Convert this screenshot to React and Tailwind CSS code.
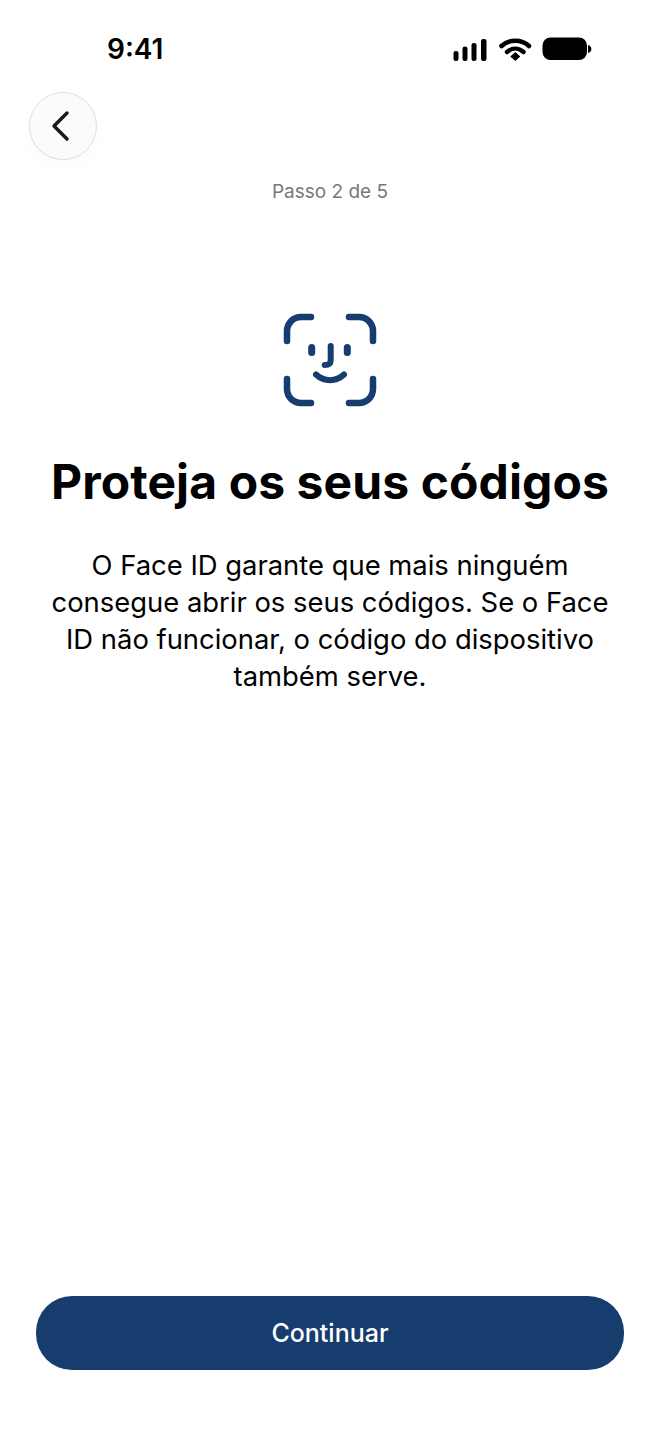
import React from "react";

const FONT = { fontFamily: "Inter, sans-serif" };

const StatusIcons = () => (
  <svg width="140" height="24" viewBox="0 0 140 24" fill="none">
    {/* signal */}
    <rect x="1.5" y="14" width="5" height="10" rx="2.200" fill="#000" />
    <rect x="10.5" y="9.5" width="5" height="14.5" rx="2.200" fill="#000" />
    <rect x="19.5" y="6" width="5" height="18" rx="2.200" fill="#000" />
    <rect x="29" y="2" width="5.500" height="22" rx="2.200" fill="#000" />
    {/* wifi */}
    <path d="M49.500 9C57 2 69.500 2 77 9" stroke="#000" strokeWidth="4.600" strokeLinecap="round" />
    <path d="M55 15C60 10.500 66.500 10.500 71.500 15" stroke="#000" strokeWidth="4.400" strokeLinecap="round" />
    <path d="M58.300 19.400L63.300 15L68.300 19.400L63.300 24Z" fill="#000" />
    {/* battery */}
    <rect x="90.5" y="0.5" width="44.5" height="22.5" rx="8" fill="#000" />
    <path d="M136 8c2 .4 3.4 2 3.4 4s-1.4 3.600-3.400 4z" fill="#000" />
  </svg>
);

const FaceId = () => (
  <svg width="120" height="120" viewBox="0 0 120 120" fill="none" stroke="#163d6e" strokeWidth="6.500" strokeLinecap="round">
    <path d="M17 41V31a14 14 0 0 1 14-14H41" />
    <path d="M79 17H89a14 14 0 0 1 14 14V41" />
    <path d="M17 79V89a14 14 0 0 0 14 14H41" />
    <path d="M79 103H89a14 14 0 0 0 14-14V79" />
    <path d="M41.700 47.500V52.500" strokeWidth="7" />
    <path d="M77.300 47.500V52.500" strokeWidth="7" />
    <path d="M60.700 46V60c0 3.500-2 5-6 5" strokeWidth="6" />
    <path d="M46 74.500c8 7.500 20 7.500 28 0" strokeWidth="6" />
  </svg>
);

export default function App() {
  return (
    <div className="flex h-[1434px] w-[660px] flex-col items-center bg-white text-black" style={FONT}>
      {/* Status bar */}
      <div className="flex h-[92px] w-full items-start justify-between pl-[107px] pr-[68px] pt-[31px]">
        <span className="text-[28px] font-semibold leading-[36px]">9:41</span>
        <div className="pt-[6px]">
          <StatusIcons />
        </div>
      </div>

      {/* Back button */}
      <div className="w-full pl-[29px]">
        <button className="flex h-[68px] w-[68px] items-center justify-center rounded-full border border-[#dfdfdf] bg-[#fbfbfb] shadow-[0_6px_14px_rgba(0,0,0,0.02)]">
          <svg width="24" height="32" viewBox="0 0 24 32" fill="none" stroke="#1a1a1a" strokeWidth="3.500" strokeLinecap="round" strokeLinejoin="round" className="mr-[4px]">
            <path d="M18 3L5 16L18 29" />
          </svg>
        </button>
      </div>

      <p className="mt-[20px] text-[19px] leading-[24px] text-[#77777c]">Passo 2 de 5</p>

      <div className="mt-[96px]">
        <FaceId />
      </div>

      <h1 className="mt-[34px] whitespace-nowrap text-[48px] font-bold leading-[56px] tracking-[0.002em]">Proteja os seus códigos</h1>

      <p className="mt-[37px] w-[600px] text-center text-[27.400px] leading-[37px]">
        O Face ID garante que mais ninguém
        <br />
        consegue abrir os seus códigos. Se o Face
        <br />
        ID não funcionar, o código do dispositivo
        <br />
        também serve.
      </p>

      <button className="mb-[64px] mt-auto flex h-[74px] w-[588px] items-center justify-center rounded-[36px] bg-[#163d6e] pt-[2px] text-[25px] font-medium text-white">
        Continuar
      </button>
    </div>
  );
}
